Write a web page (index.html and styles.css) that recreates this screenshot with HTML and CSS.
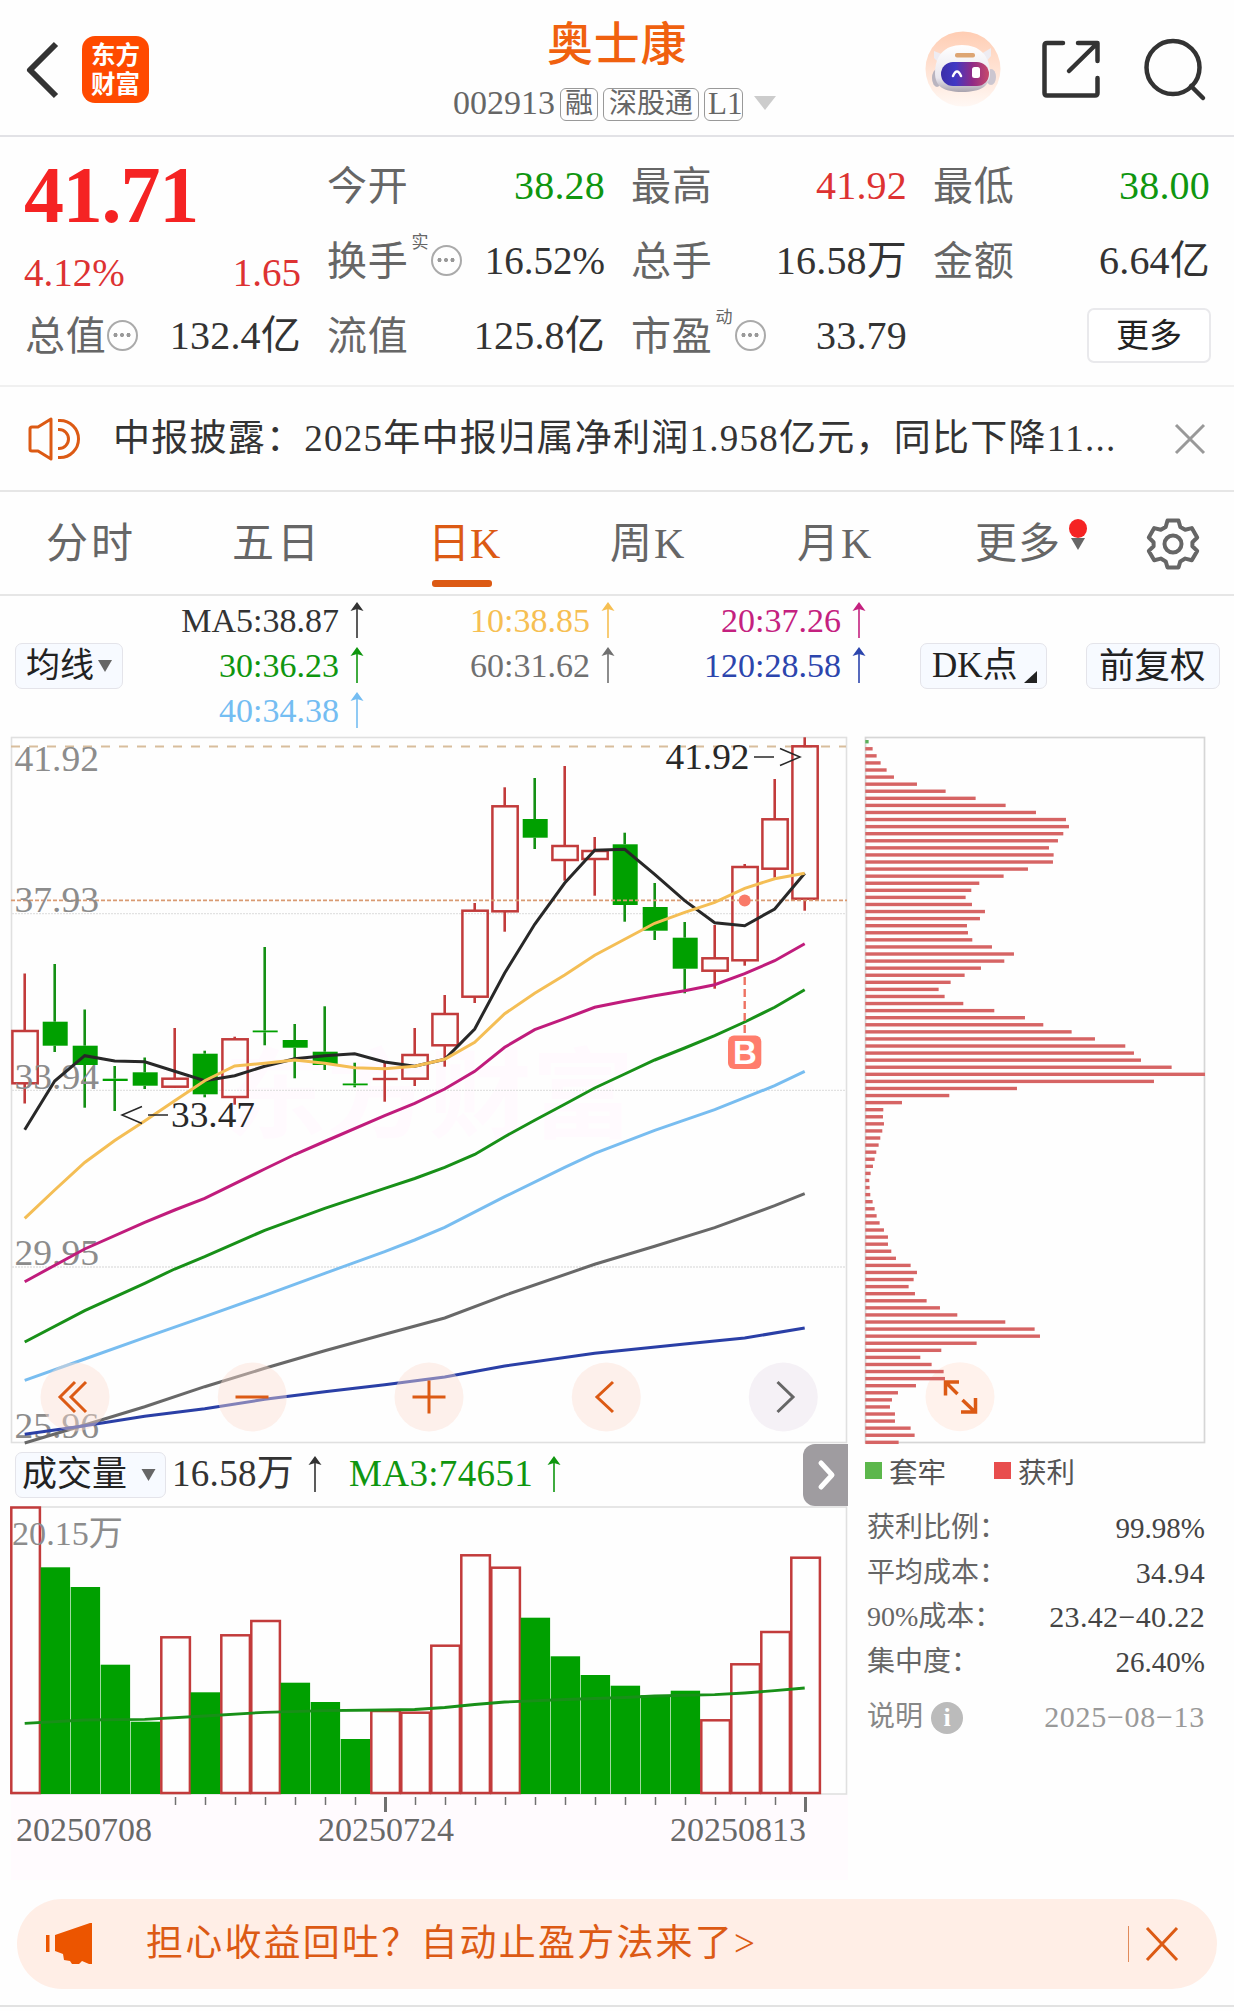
FILE: index.html
```html
<!DOCTYPE html>
<html lang="zh-CN">
<head>
<meta charset="utf-8">
<title>奥士康 002913</title>
<link rel="stylesheet" href="styles.css">
</head>
<body>
<header class="topbar">
  <div class="topbar-left">
    <svg class="back" width="32" height="56" viewBox="0 0 32 56"><path d="M30 2 4 28 30 54" fill="none" stroke="#333" stroke-width="6" stroke-linejoin="round"/></svg>
    <div class="logo"><span>东方</span><span>财富</span></div>
  </div>
  <div class="topbar-title">
    <h1>奥士康</h1>
    <div class="code"><span class="code-num">002913</span><span class="tag">融</span><span class="tag">深股通</span><span class="tag tag-l1">L1</span><svg class="caret" width="22" height="14" viewBox="0 0 22 14"><path d="M0 0h22L11 14z" fill="#ccc"/></svg></div>
  </div>
  <div class="topbar-right">
    <svg width="76" height="76" viewBox="0 0 76 76">
      <defs>
        <linearGradient id="halo" x1="0" y1="0" x2="0" y2="1"><stop offset="0" stop-color="#ffcdb3"/><stop offset="1" stop-color="#fff8f4"/></linearGradient>
        <linearGradient id="visor" x1="0" y1="0" x2="1" y2="0"><stop offset="0" stop-color="#3b2fa8"/><stop offset=".3" stop-color="#4038c4"/><stop offset=".65" stop-color="#8f2a86"/><stop offset="1" stop-color="#c84a6a"/></linearGradient>
        <linearGradient id="shell" x1="0" y1="0" x2="0" y2="1"><stop offset="0" stop-color="#fff"/><stop offset=".7" stop-color="#e9e7ee"/><stop offset="1" stop-color="#a9a3ae"/></linearGradient>
      </defs>
      <circle cx="38" cy="38" r="37.500" fill="url(#halo)"/>
      <path d="M9 20l10 4-3 10-7-7zM66 17l-10 6 4 9 6-7z" fill="#eeecf2"/>
      <ellipse cx="12" cy="47" rx="5" ry="9" fill="#b9b4bf"/><ellipse cx="66" cy="46" rx="5" ry="8" fill="#cbc6d0"/>
      <path d="M37 14c18 0 28 11 28 28 0 13-9 19-28 19S10 55 10 42c0-17 9-28 27-28z" fill="url(#shell)"/>
      <rect x="30" y="22" width="20" height="4.500" rx="2" fill="#dda573"/>
      <rect x="16" y="31" width="48" height="24" rx="12" fill="url(#visor)"/>
      <path d="M28 45q4-9 8 0" fill="none" stroke="#fff" stroke-width="2.500" stroke-linecap="round"/>
      <rect x="47" y="36" width="8" height="11" rx="2.500" fill="#fff"/>
    </svg>
    <svg class="share" width="60" height="60" viewBox="0 0 60 60" fill="none" stroke="#333" stroke-width="4.500" stroke-linejoin="round" stroke-linecap="round"><path d="M22 4H6Q3.500 4 3.500 6.500V54q0 2.500 2.500 2.500H54q2.500 0 2.500-2.500V39M37 4H56.500V22M56 4.500 28 32"/></svg>
    <svg class="search" width="62" height="62" viewBox="0 0 62 62" fill="none" stroke="#333" stroke-width="4.500"><circle cx="30" cy="29.500" r="26.500"/><path d="M48 48 60 60" stroke-linecap="round"/></svg>
  </div>
</header>

<section class="stats">
  <div class="price">
    <div class="price-now">41.71</div>
    <div class="price-chg"><span>4.12%</span><span>1.65</span></div>
  </div>
  <div class="cell"><label>今开</label><b class="down">38.28</b></div>
  <div class="cell"><label>最高</label><b class="up">41.92</b></div>
  <div class="cell"><label>最低</label><b class="down">38.00</b></div>
  <div class="cell"><label>换手<sup>实</sup><i class="info"></i></label><b class="pct">16.52%</b></div>
  <div class="cell"><label>总手</label><b>16.58万</b></div>
  <div class="cell"><label>金额</label><b>6.64亿</b></div>
  <div class="cell"><label>总值<i class="info"></i></label><b>132.4亿</b></div>
  <div class="cell"><label>流值</label><b>125.8亿</b></div>
  <div class="cell"><label>市盈<sup>动</sup><i class="info"></i></label><b>33.79</b></div>
  <div class="cell cell-more"><button class="more">更多</button></div>
</section>

<section class="news">
  <svg width="52" height="44" viewBox="0 0 52 44" fill="none" stroke="#dc5a14" stroke-width="3" stroke-linejoin="round"><path d="M2 12 Q2 10 4 10h6L23 2v40L10 34H4q-2 0-2-2zM30 3.500h2a18.500 18.500 0 0 1 0 37h-2M30 12.500h1a9.500 9.500 0 0 1 0 19h-1"/></svg>
  <p>中报披露：2025年中报归属净利润1.958亿元，同比下降11...</p>
  <svg class="close" width="30" height="30" viewBox="0 0 30 30" stroke="#999" stroke-width="3"><path d="M1 1 29 29M29 1 1 29"/></svg>
</section>

<nav class="tabs">
  <a>分时</a><a>五日</a><a class="on">日K</a><a>周K</a><a>月K</a>
  <a class="tab-more">更多<span class="pin"><svg width="14" height="12" viewBox="0 0 14 12"><path d="M0 0h14L7 12z" fill="#666"/></svg></span></a>
  <svg class="gear" width="52" height="52" viewBox="-26 -26 52 52" fill="none" stroke="#666" stroke-width="4"><path d="M-5.500-23.500h11l1.800 6.500 4.900 2.800 6.600-1.700 5.400 9.400-4.800 4.700v4l4.800 4.700-5.400 9.400-6.600-1.700-4.900 2.800-1.800 6.100h-11l-1.800-6.100-4.900-2.800-6.600 1.700-5.400-9.400 4.800-4.700v-4l-4.800-4.700 5.400-9.400 6.600 1.700 4.900-2.800z" stroke-linejoin="round"/><circle r="8.500"/></svg>
</nav>

<section class="legend">
  <button class="chip chip-ma">均线<svg width="14" height="12" viewBox="0 0 14 12"><path d="M0 0h14L7 12z" fill="#666"/></svg></button>
  <div class="ma-grid">
    <span class="c5">MA5:38.87<svg class="arr"><use href="#arrow"/></svg></span><span class="c10">10:38.85<svg class="arr"><use href="#arrow"/></svg></span><span class="c20">20:37.26<svg class="arr"><use href="#arrow"/></svg></span>
    <span class="c30">30:36.23<svg class="arr"><use href="#arrow"/></svg></span><span class="c60">60:31.62<svg class="arr"><use href="#arrow"/></svg></span><span class="c120">120:28.58<svg class="arr"><use href="#arrow"/></svg></span>
    <span class="c40">40:34.38<svg class="arr"><use href="#arrow"/></svg></span>
  </div>
  <button class="chip chip-dk">DK点<svg width="13" height="12" viewBox="0 0 13 12"><path d="M13 0V12H0z" fill="#222"/></svg></button>
  <button class="chip chip-fq">前复权</button>
</section>
<svg class="defs" width="0" height="0"><symbol id="arrow" viewBox="0 0 16 36"><path d="M8 3V36" stroke="currentColor" stroke-width="1.600"/><path d="M8 0 14.500 9 8 7 1.500 9z" fill="currentColor"/></symbol></svg>

<main class="main">
  <div class="col-left">
    <svg id="kline" width="850" height="708" viewBox="0 736 850 708"></svg>
    <div class="vol-head">
      <button class="chip chip-vol">成交量<svg width="15" height="12" viewBox="0 0 14 12"><path d="M0 0h14L7 12z" fill="#666"/></svg></button>
      <span class="vol-now">16.58万<svg class="arr"><use href="#arrow"/></svg></span>
      <span class="vol-ma">MA3:74651<svg class="arr"><use href="#arrow"/></svg></span>
      <div class="handle"><svg width="18" height="30" viewBox="0 0 18 30"><path d="M3 3 14 15 3 27" fill="none" stroke="#fff" stroke-width="5" stroke-linecap="round" stroke-linejoin="round"/></svg></div>
    </div>
    <svg id="volume" width="850" height="376" viewBox="0 1506 850 376"></svg>
  </div>
  <aside class="col-right">
    <svg id="chips" width="384" height="708" viewBox="850 736 384 708"></svg>
    <div class="chip-legend"><span class="sq sq-g"></span><span>套牢</span><span class="sq sq-r"></span><span>获利</span></div>
    <dl>
      <div><dt>获利比例：</dt><dd>99.98%</dd></div>
      <div><dt>平均成本：</dt><dd class="wide">34.94</dd></div>
      <div><dt>90%成本：</dt><dd class="wide">23.42−40.22</dd></div>
      <div><dt>集中度：</dt><dd>26.40%</dd></div>
      <div class="note"><dt>说明<i>i</i></dt><dd>2025−08−13</dd></div>
    </dl>
  </aside>
</main>

<footer class="promo">
  <svg width="50" height="42" viewBox="0 0 50 42" fill="#ec5500"><path d="M0 12h3.500v17H0zM9 12 44 0h2v41h-3l-7-3-3 3h-7l-2-3-6-1-1-6-8-3z"/></svg>
  <p>担心收益回吐？自动止盈方法来了&gt;</p>
  <span class="bar"></span>
  <svg width="34" height="34" viewBox="0 0 34 34" stroke="#dc5a14" stroke-width="3"><path d="M2 1 32 33M32 1 2 33"/></svg>
</footer>
<script src="charts.js"></script>
</body>
</html>
```

FILE: styles.css
```css
* { box-sizing: border-box; }
body {
  margin: 0;
  width: 1234px;
  height: 2011px;
  overflow: hidden;
  background: #fefefe;
  color: #333;
  font-family: "Liberation Serif", "Noto Sans CJK SC", serif;
  white-space: nowrap;
}
button { font: inherit; color: inherit; padding: 0; margin: 0; }
svg { display: block; flex: none; overflow: visible; }
h1, p, dl, dd { margin: 0; }
.defs { height: 0; }

.topbar {
  display: grid;
  grid-template-columns: 453px 1fr 309px;
  height: 137px;
  border-bottom: 2px solid #e2e2e6;
}
.topbar-left { display: flex; gap: 24px; padding: 36px 0 0 26px; }
.back { margin-top: 6px; }
.logo {
  width: 67px; height: 67px;
  border-radius: 13px;
  background: #ff4a00;
  color: #fff;
  display: flex; flex-direction: column; align-items: center; justify-content: center;
  font-weight: 700; font-size: 24.500px; line-height: 29px;
}
.topbar-title { padding-top: 15px; }
h1 { margin-left: 94px; font-size: 46px; font-weight: 500; line-height: 60px; height: 57px; letter-spacing: .8px; color: #f0610f; }
.code { display: flex; align-items: center; height: 62px; color: #666; font-size: 34px; }
.code-num { width: 107px; line-height: 60px; }
.tag {
  height: 33px; line-height: 29px;
  border: 1.5px solid #999; border-radius: 6px;
  margin-right: 5px; margin-top: 2px; padding: 0 4px;
  font-size: 28px;
}
.tag:nth-child(3) { padding: 0 5px; }
.tag-l1 { font-size: 31px; padding: 0 3px; width: 39px; }
.caret { margin-left: 6px; }
.topbar-right { display: flex; padding: 31px 0 0 0; }
.share { margin: 8px 0 0 40px; }
.search { margin: 7px 0 0 42px; }

.stats {
  display: grid;
  grid-template: repeat(3, 75px) / 276px 278px 276px 277px;
  column-gap: 26px;
  height: 250px;
  padding: 11px 0 0 25px;
  border-bottom: 2px solid #f0f0f0;
}
.price { grid-row: 1 / 3; }
.price-now { margin: 6px 0 0 -1px; height: 82px; line-height: 82px; font-size: 80px; font-weight: 700; letter-spacing: -1.2px; color: #f52323; }
.price-chg { display: flex; justify-content: space-between; font-size: 39px; line-height: 44px; margin: 15px 0 0 -1px; color: #dd3232; }
.cell { display: flex; justify-content: space-between; align-items: center; font-size: 40px; line-height: 75px; }
.cell label { display: flex; align-items: center; color: #666; letter-spacing: .7px; padding-top: 1px; }
.cell b { font-weight: 400; font-size: 40px; letter-spacing: .2px; }
.cell b.pct { font-size: 39px; letter-spacing: 0; }
.cell sup { font-size: 17px; line-height: 20px; margin: 0 2px 36px 3px; letter-spacing: 0; }
.cell .up { color: #dd3232; }
.cell .down { color: #0f960f; }
.info {
  width: 31px; height: 31px; margin: -2px 0 0 1px;
  border: 2.500px solid #aaa; border-radius: 50%;
  background:
    radial-gradient(circle at 6.500px 13px, #999 1.800px, transparent 2.300px),
    radial-gradient(circle at 13px 13px, #999 1.800px, transparent 2.300px),
    radial-gradient(circle at 19.500px 13px, #999 1.800px, transparent 2.300px);
}
.cell-more { justify-content: flex-end; }
.more { width: 124px; height: 55px; margin-right: -1px; border: 2px solid #e9e9ec; border-radius: 7px; background: #fff; font-size: 33px; line-height: 48px; color: #222; }

.news { display: flex; align-items: center; height: 105px; padding: 0 29px 0 28px; border-bottom: 2px solid #e6e6e6; }
.news p { margin-left: 33px; flex: 1; font-size: 37px; letter-spacing: 1.260px; line-height: 50px; }

.tabs { display: flex; height: 104px; border-bottom: 2px solid #e6e6e6; position: relative; color: #666; font-size: 42px; line-height: 104px; }
.tabs a { position: relative; width: 188px; padding-left: 46px; letter-spacing: 3px; flex: none; }
.tabs a:nth-child(2) { padding-left: 44px; width: 194px; }
.tabs a:nth-child(3) { padding-left: 46px; width: 179px; letter-spacing: 0; }
.tabs a:nth-child(4) { padding-left: 49px; width: 186px; letter-spacing: 2px; }
.tabs a:nth-child(5) { padding-left: 50px; width: 180px; letter-spacing: 2px; }
.tabs .on { color: #dc5a14; }
.tabs .on::after { content: ""; position: absolute; left: 50px; bottom: 7px; width: 60px; height: 7px; border-radius: 3px; background: #dc5a14; }
.tabs .tab-more { display: flex; width: 220px; padding-left: 48px; letter-spacing: 1px; }
.pin { position: relative; margin: 46px 0 0 10px; height: 12px; }
.pin::before { content: ""; position: absolute; left: -2px; top: -19px; width: 18px; height: 19px; border-radius: 50%; background: #f52323; }
.gear { margin-top: 26px; }

.legend { display: flex; align-items: center; height: 140px; padding-left: 15px; }
.chip {
  display: flex; align-items: center;
  height: 46px; line-height: 42px;
  border: 1.500px solid #e4e4ea; border-radius: 7px;
  background: #f7faff; color: #222;
}
.chip-ma { width: 108px; padding-left: 10px; font-size: 34px; gap: 4px; }
.ma-grid {
  display: grid; grid-template: repeat(3, 45px) / 242px 251px 251px;
  font-size: 34px; line-height: 45px; width: 797px; margin-top: -2px;
}
.ma-grid span { display: flex; justify-content: flex-end; align-items: center; }
.arr { width: 16px; height: 36px; margin-left: 10px; }
.c5 { color: #333; } .c10 { color: #f6bf52; } .c20 { color: #c4217f; }
.c30 { color: #0f960f; } .c60 { color: #707070; } .c120 { color: #2c45ad; } .c40 { color: #74bdf2; }
.chip-dk { width: 127px; padding-left: 11px; font-size: 35px; }
.chip-dk svg { margin: 22px 0 0 6px; }
.chip-fq { width: 134px; margin-left: 39px; padding-left: 12px; font-size: 35.500px; }

.main { display: flex; height: 1146px; }
.col-left { width: 850px; }
.vol-head { display: flex; align-items: center; height: 62px; padding-left: 15px; font-size: 37px; line-height: 56px; }
.chip-vol { width: 151px; padding-left: 6px; gap: 14px; font-size: 35px; }
.vol-head span { display: flex; align-items: center; height: 58px; margin-top: -2px; }
.vol-head .vol-now { margin-left: 6px; letter-spacing: .3px; }
.vol-now .arr { margin-left: 13px; }
.vol-head .vol-ma { margin-left: 26px; color: #0f960f; letter-spacing: .35px; }
.vol-ma .arr { margin-left: 13px; }
.handle { margin-left: auto; margin-right: 2px; width: 45px; height: 62px; border-radius: 12px 0 0 12px; background: #9f9ca0; display: flex; align-items: center; padding-left: 15px; }

.col-right { width: 384px; }
.chip-legend { display: flex; align-items: center; height: 56px; padding: 0 0 3px 15px; font-size: 28.500px; color: #555; }
.sq { width: 17px; height: 17px; margin-right: 7px; }
.sq-g { background: #5cb74c; }
.sq-r { background: #e84d4d; margin-left: 48px; }
dl { padding: 6px 29px 0 17px; font-size: 29px; line-height: 44.600px; color: #444; }
dl div { display: flex; justify-content: space-between; }
dt { font-size: 28px; color: #666; }
.wide { font-size: 30px; letter-spacing: .35px; }
.note { margin-top: 11px; }
.note dt { display: flex; align-items: center; color: #888; }
.note dd { color: #999; font-size: 30px; letter-spacing: .7px; }
.note i { width: 32px; height: 32px; margin-left: 8px; border-radius: 50%; background: #bbb; color: #fff; font: 700 26px/31px "Liberation Serif", serif; text-align: center; }

.promo {
  display: flex; align-items: center;
  width: 1200px; height: 90px; margin: 17px 0 0 17px;
  border-radius: 45px; background: #ffeee6; color: #dc5a14;
  padding: 0 38px 0 29px;
  font-size: 37px; line-height: 80px;
}
.promo p { margin-left: 50px; flex: 1; letter-spacing: 2.200px; }
.bar { width: 1.500px; height: 36px; background: #e08a5a; margin-right: 16px; }
.promo::after { content: ""; position: absolute; left: 0; top: 2005px; width: 1234px; height: 2px; background: #e2e2e2; }
```

FILE: charts.js
```js
const RED = '#c23b3b', GREEN = '#00a000';
const X0 = 24.7, STEP = 30;
const x = i => X0 + STEP * i;

// [rising, high, body top, body bottom, low]
const candles = [
  [1,973.5,1031,1083.3,1103.5],[0,964,1021.7,1045.7,1052],[0,1009.5,1045.7,1065,1107.7],[0,1066,1078.7,1081,1111],
  [0,1057.5,1072.3,1085.7,1089],[1,1028,1078.7,1086.7,1087.7],[0,1050.7,1053.7,1094.3,1097.3],[1,1036.7,1039.3,1097,1104.7],
  [0,947,1030.5,1032.3,1045.3],[0,1024,1040,1047.7,1078.3],[0,1006.3,1051.7,1065,1070],[0,1062.7,1083.5,1085.3,1087.3],
  [1,1062.7,1079,1079,1101.7],[1,1028,1055,1078.7,1086],[1,995,1014,1045.3,1066.7],[1,903,910.7,996.7,1003],
  [1,787.3,806.3,911.3,931.7],[0,778,819,837.7,849],[1,766,846,860,880.7],[1,837,851,859,895.7],
  [0,832.7,844.3,905,921.7],[0,883,907,930.7,940],[0,922,937.7,968.7,993.3],[1,925,958.3,970.7,988.7],
  [1,864,867,960.3,965.7],[1,779,819.3,868.7,877.7],[1,737.3,746.3,898.7,910.7]
];

const averages = {
  '#282828': [[0,1129.7],[1,1081],[2,1055.7],[3,1061],[4,1061.7],[5,1071.3],[6,1080.7],[7,1075.7],[8,1066.3],[9,1058.7],[10,1055.7],[11,1053.7],[12,1062],[13,1066.3],[14,1059.3],[15,1029],[16,973],[17,924.3],[18,883],[19,850.3],[20,849.3],[21,874.3],[22,900.7],[23,922.7],[24,925.7],[25,909],[26,873.3]],
  '#f4be55': [[0,1218.3],[1,1190],[2,1162.5],[3,1140.5],[4,1121],[5,1100.7],[6,1080.7],[7,1066],[8,1063.3],[9,1060],[10,1063.3],[11,1067.7],[12,1068.7],[13,1066.3],[14,1059.3],[15,1042.3],[16,1013.7],[17,993.3],[18,975],[19,955.3],[20,939.3],[21,923.3],[22,912.3],[23,902.3],[24,888.3],[25,878.7],[26,873.3]],
  '#c01c7c': [[0,1281.7],[2,1249],[4,1222.3],[5,1210],[6,1198.3],[8,1169],[9,1154.5],[10,1141.5],[12,1115.7],[13,1103.3],[14,1089],[15,1071.3],[16,1047.3],[17,1029.7],[18,1018.7],[19,1007.3],[20,1001.3],[21,995.7],[22,990.7],[23,984.7],[24,973.7],[25,960.7],[26,943.7]],
  '#189018': [[0,1342],[2,1310.7],[4,1283.3],[5,1269],[6,1256.7],[8,1230.3],[10,1208.3],[12,1188.3],[13,1178.5],[14,1167.3],[15,1154.5],[16,1136.7],[17,1120.3],[18,1104.3],[19,1088],[20,1074],[21,1060],[22,1048],[23,1035.7],[24,1022],[25,1007.3],[26,989.7]],
  '#78bdf0': [[0,1380.3],[2,1359],[4,1337.7],[6,1316.7],[8,1295.3],[10,1273.3],[12,1251.7],[13,1240],[14,1227.3],[16,1196.7],[18,1167.3],[19,1153.3],[21,1130.3],[23,1109.7],[24,1097.7],[25,1085.7],[26,1071.3]],
  '#686868': [[0,1443],[2,1425],[4,1406.7],[6,1386.7],[8,1368.3],[10,1350.7],[12,1334.3],[14,1318],[16,1295.3],[19,1264.3],[21,1246.3],[23,1227.7],[25,1205.7],[26,1193.7]],
  '#2a3fa6': [[0,1434.3],[2,1425.7],[4,1416.3],[6,1408.7],[8,1399.3],[10,1391.7],[12,1384.7],[14,1377],[16,1366],[19,1353.3],[22,1344],[24,1338],[26,1328]]
};

const line = (x1, y1, x2, y2, c, w, extra = '') => `<line x1="${x1}" y1="${y1}" x2="${x2}" y2="${y2}" stroke="${c}" stroke-width="${w}" ${extra}/>`;
const poly = (pts, c, w) => `<polyline points="${pts.map(p => x(p[0]) + ',' + p[1]).join(' ')}" fill="none" stroke="${c}" stroke-width="${w}"/>`;
const text = (tx, y, s, len, size, c, extra = '') => `<text x="${tx}" y="${y}" font-size="${size}" fill="${c}" textLength="${len}" lengthAdjust="spacingAndGlyphs" ${extra}>${s}</text>`;

// Price chart
let k = '<rect x="11.500" y="737.500" width="835" height="705" fill="none" stroke="#e0e0e0" stroke-width="1.600"/>';
k += text(224, 1130, '东方财富', 410, 98, '#fffafe', 'font-weight="700"');
[913.7, 1090.3, 1267].forEach(y => { k += line(12, y, 846, y, '#e2e2e2', 1.3, 'stroke-dasharray="2 1"'); });
k += line(11, 746.5, 846, 746.5, '#d8bd9c', 1.8, 'stroke-dasharray="9 9"');
candles.forEach(([up, h, t, b, l], i) => {
  const c = up ? RED : '#149014', cx = x(i);
  k += line(cx, h, cx, t, c, 2.6) + line(cx, b, cx, l, c, 2.6);
  if (t === b) k += line(cx - 12, t, cx + 13, t, c, 2.4);
  else k += up
    ? `<rect x="${cx - 12.3}" y="${t}" width="25.300" height="${b - t}" fill="none" stroke="${RED}" stroke-width="2.500"/>`
    : `<rect x="${cx - 12}" y="${t}" width="25" height="${b - t}" fill="${GREEN}"/>`;
});
k += line(11, 900.3, 847, 900.3, '#d99a72', 1.8, 'stroke-dasharray="4 2"');
[[771,'41.92'],[911.7,'37.93'],[1089,'33.94'],[1265,'29.95'],[1437.7,'25.96']].forEach(([y, s]) => { k += text(14.5, y, s, 84.500, 35, '#8c8c8c'); });
Object.entries(averages).forEach(([c, pts]) => { k += poly(pts, c, 3); });
k += text(171, 1126.7, '33.47', 84, 36, '#282828') + text(665.5, 769, '41.92', 84, 36, '#282828');
k += '<path d="M142 1106.500 122 1115 142 1123.500M148 1115H168M754 757H774M780 748.500 800 757 780 765.500" fill="none" stroke="#282828" stroke-width="1.500"/>';
k += '<circle cx="744.700" cy="900.500" r="6" fill="#f97a68"/>' + line(744.7, 977, 744.7, 1034, '#ee7262', 2.4, 'stroke-dasharray="8 4"');
k += '<rect x="728" y="1035.500" width="33.300" height="33.500" rx="6" fill="#ff7d6c"/><text x="744.900" y="1064" font-size="33" font-weight="700" font-family="Liberation Sans, sans-serif" fill="#fff" text-anchor="middle">B</text>';
[75, 252.3, 429, 606.3, 783.3].forEach((cx, i) => { k += `<circle cx="${cx}" cy="1397" r="34.500" fill="${i === 4 ? '#e9e1ec' : '#fdded2'}" opacity=".42"/>`; });
k += '<g fill="none" stroke="#dc5a14" stroke-width="3"><path d="M75 1382 60 1397 75 1412M86 1382 71 1397 86 1412M235.500 1397H268.500M412.500 1397H445.500M429 1380.500V1413.500M613 1382 597 1397 613 1412"/><path d="M777.500 1382 793 1397 777.500 1412" stroke="#666"/></g>';
document.getElementById('kline').innerHTML = k;

// Volume chart: [rising, bar top]
const volumes = [[1,1507.5],[0,1567.3],[0,1587],[0,1664.7],[0,1721.7],[1,1637.3],[0,1692.3],[1,1635.3],[1,1621],[0,1682.7],[0,1702],[0,1739],[1,1711],[1,1712.7],[1,1645.7],[1,1555.3],[1,1567.7],[0,1617.7],[0,1656.3],[0,1675],[0,1685.7],[0,1695.3],[0,1690.7],[1,1720.3],[1,1664.3],[1,1632],[1,1557.7]];
let v = '<rect x="11" y="1795" width="837" height="85" fill="#fffbfe"/><rect x="11.500" y="1507" width="835" height="287" fill="none" stroke="#e0e0e0" stroke-width="1.600"/>';
volumes.forEach(([up, t], i) => {
  const cx = x(i);
  v += up
    ? `<rect x="${cx - 13.4}" y="${t}" width="28.600" height="${1793 - t}" fill="#fefefe" stroke="${RED}" stroke-width="2.500"/>`
    : `<rect x="${cx - 14}" y="${t}" width="29.400" height="${1794 - t}" fill="${GREEN}"/>`;
  if (i > 4) { const big = i === 12 || i === 26; v += line(cx + .8, 1797, cx + .8, big ? 1812 : 1805, '#707070', big ? 3 : 1.5); }
});
v += poly([[0,1723.3],[2,1720],[4,1719.3],[6,1716],[8,1712.3],[10,1710.7],[12,1710],[13,1709.5],[14,1707.5],[15,1704.5],[16,1702],[18,1699.5],[20,1697.5],[21,1696],[23,1694.7],[24,1693],[25,1690.7],[26,1688]], '#189018', 2.8);
v += text(12, 1545, '20.15万', 111, 34, '#8c8c8c');
v += text(16, 1841, '20250708', 136, 34, '#686868') + text(318, 1841, '20250724', 136, 34, '#686868') + text(670, 1841, '20250813', 136, 34, '#686868');
document.getElementById('volume').innerHTML = v;

// Cost distribution: bar lengths in thirds of a pixel
const cost = [10,22,34,46,64,86,155,241,331,421,512,602,611,594,578,551,565,563,488,415,342,318,301,320,359,344,305,308,321,380,446,417,347,298,256,220,238,294,387,479,534,619,689,780,806,827,919,1019,866,455,252,110,54,53,56,51,45,40,33,28,23,16,12,13,15,22,28,34,43,56,68,68,78,92,136,155,145,130,149,184,224,276,420,508,524,334,228,165,199,235,239,152,98,80,74,89,89,136,148,100];
let p = '<rect x="865.500" y="737.500" width="339" height="705" fill="none" stroke="#d6d6d6" stroke-width="1.700"/>';
p += '<circle cx="960" cy="1396.700" r="34.500" fill="#fff2ec"/>';
cost.forEach((w, i) => { p += `<rect x="865.300" y="${741.7 + i * 7.077 - 1.7}" width="${w / 3}" height="3.400" fill="${i ? '#d66464' : '#5cb05c'}"/>`; });
p += '<path d="M959 1382H945.500V1395.500M945.500 1382 957.500 1394M962.500 1400 975 1412M961 1412H975.500V1398" fill="none" stroke="#dc5a14" stroke-width="3.500"/>';
document.getElementById('chips').innerHTML = p;
```
